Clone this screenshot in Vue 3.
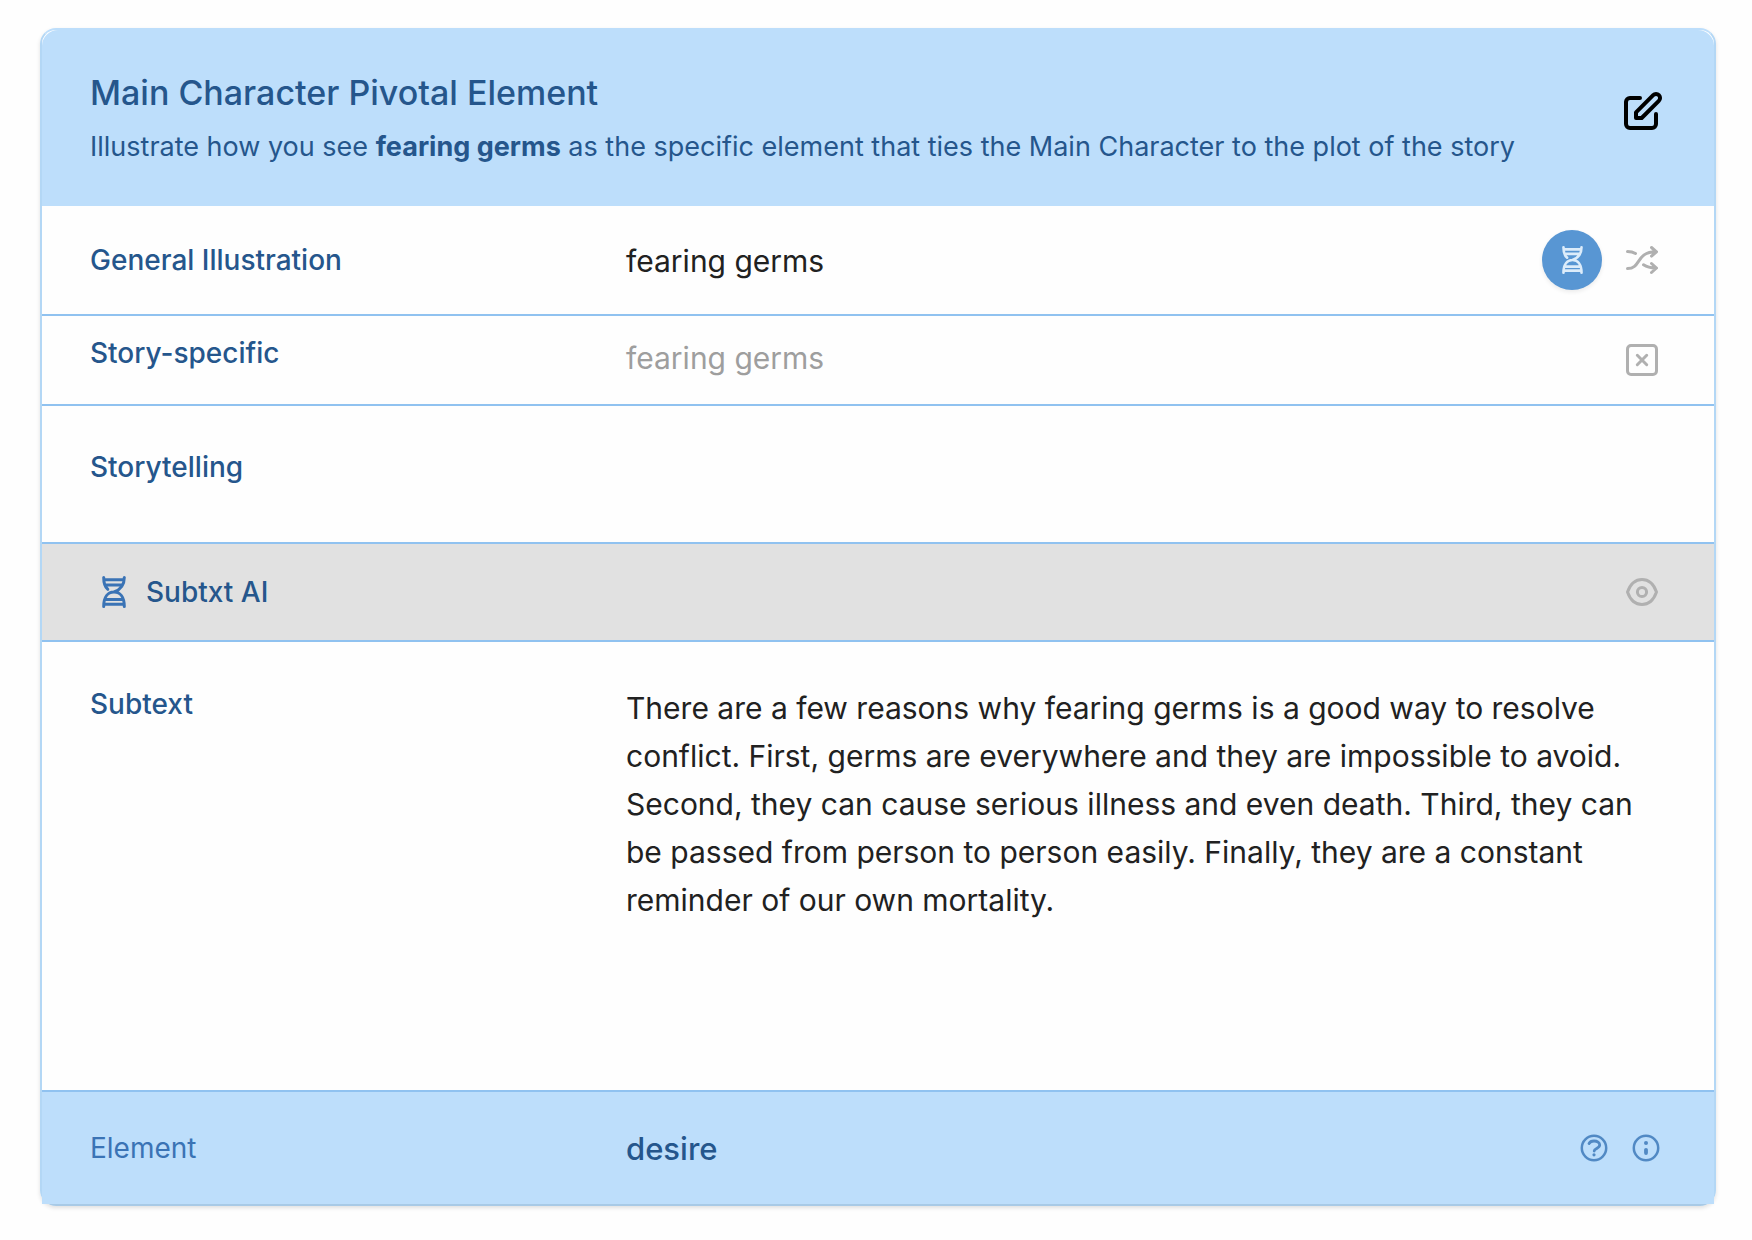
<script setup>
const dna =
  'M22.3 1.5C22.3 9 19 13.500 12 16M1.7 1.5C1.7 7.500 2.500 10.800 5.800 13.300M1.700 30.500C1.700 21 6 16 12 16s10.300 5 10.300 14.500M2.500 3.800h19M3.500 9h17M3.500 23.500h17M2.500 28.200h19'

const subtext =
  'There are a few reasons why fearing germs is a good way to resolve conflict. First, germs are everywhere and they are impossible to avoid. Second, they can cause serious illness and even death. Third, they can be passed from person to person easily. Finally, they are a constant reminder of our own mortality.'
</script>

<template>
  <main class="page">
    <article class="card">
      <header class="head">
        <div>
          <h1 class="title">Main Character Pivotal Element</h1>
          <p class="lead">
            Illustrate how you see <strong>fearing germs</strong> as the specific element that ties the Main Character
            to the plot of the story
          </p>
        </div>
        <button class="icon-btn ink" type="button" aria-label="Edit">
          <svg width="48" height="48" viewBox="0 0 24 24" stroke-width="2">
            <path d="M11 5H6a2 2 0 0 0-2 2v11a2 2 0 0 0 2 2h11a2 2 0 0 0 2-2v-5m-1.414-9.414a2 2 0 1 1 2.828 2.828L11.828 15H9v-2.828l8.586-8.586z" />
          </svg>
        </button>
      </header>

      <section class="row general">
        <h2 class="label">General Illustration</h2>
        <div class="value">
          <p>fearing germs</p>
          <div class="actions">
            <button class="icon-btn round" type="button" aria-label="Generate with AI">
              <svg width="21" height="28" viewBox="0 0 24 32" stroke-width="3">
                <path :d="dna" />
              </svg>
            </button>
            <button class="icon-btn muted" type="button" aria-label="Shuffle">
              <svg width="32" height="32" viewBox="0 0 32 32" stroke-width="3">
                <path d="M1.500 7.500c3 0 5.500.5 8 2M1.500 24.500c14 0 8-16.700 28.500-16.700M25.500 3.500l5 4.300-5 4.300M17.500 20.800c3 2 7 3.200 12 3.200M25.500 19.500l5 4.500-5 4.500" />
              </svg>
            </button>
          </div>
        </div>
      </section>

      <section class="row specific">
        <h2 class="label">Story-specific</h2>
        <div class="value">
          <p class="faded">fearing germs</p>
          <button class="icon-btn muted" type="button" aria-label="Clear">
            <svg width="32" height="32" viewBox="0 0 32 32" stroke-width="3">
              <rect x="1.500" y="1.500" width="29" height="29" rx="3.500" />
              <path d="M11.300 11.300l9.400 9.400M20.700 11.300l-9.400 9.400" />
            </svg>
          </button>
        </div>
      </section>

      <section class="row telling">
        <h2 class="label">Storytelling</h2>
      </section>

      <section class="row ai">
        <h2 class="label brand">
          <svg width="24" height="32" viewBox="0 0 24 32" stroke-width="3">
            <path :d="dna" />
          </svg>
          Subtxt AI
        </h2>
        <button class="icon-btn muted" type="button" aria-label="Show">
          <svg width="32" height="32" viewBox="0 0 32 32" stroke-width="3">
            <path d="M1.500 16C4.500 7.500 9.500 3.500 16 3.500S27.500 7.500 30.500 16C27.500 24.500 22.500 28.500 16 28.500S4.500 24.500 1.500 16z" />
            <circle cx="16" cy="16" r="4.600" />
          </svg>
        </button>
      </section>

      <section class="row subtext">
        <h2 class="label">Subtext</h2>
        <p class="value">{{ subtext }}</p>
      </section>

      <footer class="row foot">
        <h2 class="label light">Element</h2>
        <div class="value">
          <p class="strong">desire</p>
          <div class="actions hints">
            <button class="icon-btn hint" type="button" aria-label="Help">
              <svg width="28" height="28" viewBox="0 0 28 28" stroke-width="2.500">
                <circle cx="14" cy="14" r="12.200" />
                <path d="M9 9.600c.8-1.700 2.700-2.600 5-2.600 3.300 0 5.700 1.700 5.700 4.100 0 3.200-5.500 3.500-5.500 6" stroke-width="2.800" />
                <circle cx="14" cy="20.800" r="1.600" fill="currentColor" stroke="none" />
              </svg>
            </button>
            <button class="icon-btn hint" type="button" aria-label="Information">
              <svg width="28" height="28" viewBox="0 0 28 28" stroke-width="2.500">
                <circle cx="14" cy="14" r="12.200" />
                <path d="M14 15.800v3.200" stroke-width="3.800" />
                <circle cx="14" cy="9" r="2" fill="currentColor" stroke="none" />
              </svg>
            </button>
          </div>
        </div>
      </footer>
    </article>
  </main>
</template>

<style>
body {
  margin: 0;
  background: #fefefe;
}
</style>

<style scoped>
.page {
  padding: 28px 36px 34px 40px;
  font-family: Inter, 'Liberation Sans', sans-serif;
  color: #212121;
}

.card {
  border: 2px solid #b3d7f5;
  border-top-color: #bddefb;
  border-bottom-color: #a8cae6;
  border-radius: 16px;
  box-shadow: 0 2px 4px rgba(0, 0, 0, 0.12);
}

h1,
h2,
p {
  margin: 0;
}

.head {
  display: flex;
  align-items: flex-start;
  justify-content: space-between;
  padding: 38px 48px;
  background: #bddefb;
  border-radius: 16px 16px 0 0;
  color: #25568c;
}

.head .icon-btn {
  margin-top: 20px;
}

.title {
  font-size: 34px;
  line-height: 50px;
  font-weight: 500;
}

.lead {
  margin-top: 8px;
  font-size: 27px;
  line-height: 42px;
}

.row {
  display: grid;
  grid-template-columns: repeat(3, 1fr);
  column-gap: 32px;
  align-items: center;
  padding: 0 48px;
  border-top: 2px solid #90c2f0;
}

.label {
  font-size: 28px;
  line-height: 42px;
  font-weight: 500;
  color: #25568c;
}

.value {
  grid-column: span 2;
  display: flex;
  align-items: center;
  justify-content: space-between;
  font-size: 30px;
  line-height: 48px;
}

.value p {
  padding-top: 2px;
}

.general {
  height: 108px;
  border-top: 0;
}

.specific {
  height: 88px;
  align-items: start;
}

.specific .label {
  padding-top: 16px;
}

.specific .value {
  align-items: flex-start;
  padding-top: 16px;
}

.specific .icon-btn {
  margin-top: 12px;
}

.faded {
  color: #9e9e9e;
}

.telling {
  height: 136px;
}

.telling .label {
  padding-bottom: 14px;
}

.ai {
  height: 96px;
  background: #e1e1e1;
}

.brand {
  display: flex;
  align-items: center;
  gap: 20px;
  padding-left: 12px;
}

.brand svg {
  color: #3a73b5;
}

.ai .icon-btn {
  grid-column: 3;
}

.subtext {
  min-height: 406px;
  padding-top: 42px;
  align-items: start;
}

.subtext .label {
  line-height: 40px;
}

.subtext .value {
  display: block;
}

.foot {
  height: 112px;
  background: #bddefb;
}

.light {
  font-weight: 400;
  color: #3a73b5;
}

.strong {
  font-size: 31px;
  font-weight: 500;
  color: #25568c;
}

.actions {
  display: flex;
  align-items: center;
  gap: 24px;
}

.icon-btn {
  display: flex;
  align-items: center;
  justify-content: center;
  justify-self: end;
  flex: none;
  padding: 0;
  border: 0;
  background: none;
  cursor: pointer;
}

.muted {
  margin-right: 8px;
  color: #b0b0b0;
}

.ink {
  color: #000;
}

.round {
  width: 60px;
  height: 60px;
  border-radius: 50%;
  background: #5896d3;
  color: #dcecfa;
  box-shadow: 0 2px 4px rgba(0, 0, 0, 0.08);
}

.hint {
  color: #5189c4;
}

.hints {
  padding-right: 6px;
}

svg {
  display: block;
  flex: none;
  fill: none;
  stroke: currentColor;
  stroke-linecap: round;
  stroke-linejoin: round;
}
</style>
